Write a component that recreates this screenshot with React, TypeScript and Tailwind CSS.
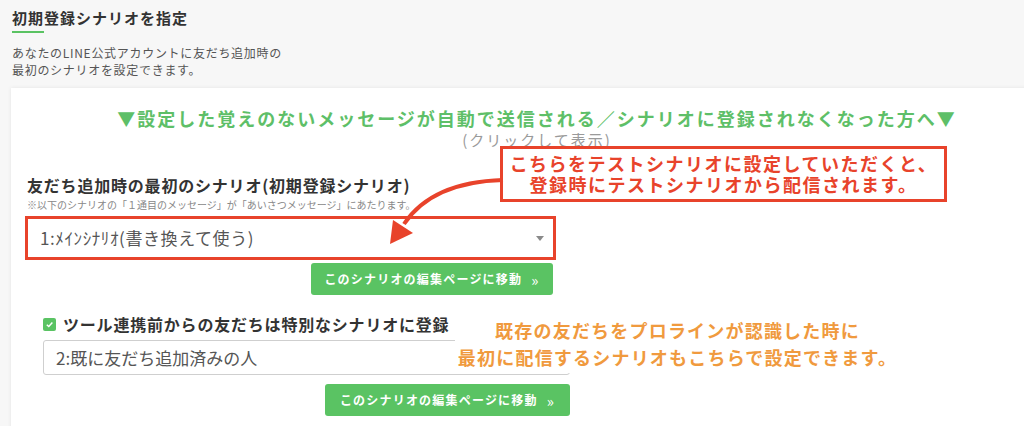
const jp = { fontFamily: '"Noto Sans CJK JP", "Noto Sans", sans-serif' };

function Caret() {
  return (
    <svg width="8" height="5" viewBox="0 0 8 5" className="shrink-0">
      <path d="M0 0 L8 0 L4 5 Z" fill="#8a8a8a" />
    </svg>
  );
}

function MoveButton({ width }: { width: string }) {
  return (
    <button
      className={`${width} h-[32px] rounded-[3px] bg-[#5ac363] text-white text-[12px] tracking-[1.2px] font-bold flex items-center justify-center gap-[9px]`}
    >
      <span>このシナリオの編集ページに移動</span>
      <span className="text-[15px] font-normal leading-none">»</span>
    </button>
  );
}

export default function App() {
  return (
    <div
      className="relative min-h-screen overflow-hidden bg-[#f7f7f7] px-[11px] text-[#333]"
      style={jp}
    >
      {/* header */}
      <div className="pt-[9px] pl-[1px]">
        <h1 className="text-[15px] leading-[17px] tracking-[1px] font-bold text-[#333]">
          初期登録シナリオを指定
        </h1>
        <div className="mt-[5px] h-[2px] w-[32px] bg-[#5ac363]" />
        <p className="mt-[11px] text-[12px] leading-[17px] tracking-[0.7px] text-[#555]">
          あなたのLINE公式アカウントに友だち追加時の
          <br />
          最初のシナリオを設定できます。
        </p>
      </div>

      {/* card */}
      <div className="mt-[10px] w-[1052px] h-[360px] bg-white shadow-[0_0_4px_rgba(0,0,0,0.08)] pt-[18px] px-[14px]">
        <p className="text-center text-[18px] leading-[24px] tracking-[2px] font-bold text-[#5ebf68]">
          ▼設定した覚えのないメッセージが自動で送信される／シナリオに登録されなくなった方へ▼
        </p>
        <p className="text-center text-[15px] leading-[20px] tracking-[2px] text-[#9a9a9a]">
          (クリックして表示)
        </p>

        <div className="mt-[26px] w-[531px]">
          <p className="pl-[2px] text-[16px] leading-[18px] tracking-[0.8px] font-bold text-[#333]">
            友だち追加時の最初のシナリオ(初期登録シナリオ)
          </p>
          <p className="mt-[5px] pl-[2px] text-[10px] leading-[12px] text-[#888]">
            ※以下のシナリオの「１通目のメッセージ」が「あいさつメッセージ」にあたります。
          </p>
          <div className="mt-[5px] h-[44px] border-[3px] border-[#e8432b] bg-white flex items-center justify-between pl-[12px] pr-[9px]">
            <span className="text-[17px] tracking-[0.6px] text-[#555]">1:ﾒｲﾝｼﾅﾘｵ(書き換えて使う)</span>
            <Caret />
          </div>
          <div className="mt-[3px] mr-[3px] flex justify-end">
            <MoveButton width="w-[242px]" />
          </div>
        </div>

        <div className="ml-[18px] mt-[21px] w-[527px]">
          <label className="flex items-center gap-[7px]">
            <span className="h-[13px] w-[13px] rounded-[2px] bg-[#5ac363] flex items-center justify-center">
              <svg width="9" height="9" viewBox="0 0 10 10">
                <path d="M2 5.2 L4.2 7.3 L8.2 2.8" fill="none" stroke="white" strokeWidth="1.6" />
              </svg>
            </span>
            <span className="text-[16px] leading-[16px] tracking-[0.8px] font-bold text-[#333]">
              ツール連携前からの友だちは特別なシナリオに登録
            </span>
          </label>
          <div className="mt-[8px] h-[35px] rounded-[3px] border border-[#cfcfcf] flex items-center pl-[12px]">
            <span className="text-[17px] text-[#555]">2:既に友だち追加済みの人</span>
          </div>
          <div className="mt-[9px] flex justify-end">
            <MoveButton width="w-[245px]" />
          </div>
        </div>
      </div>

      {/* annotation: red box */}
      <div className="absolute left-[500px] top-[146px] w-[447px] h-[56px] border-[3px] border-[#e8432b] bg-white flex flex-col items-center justify-center">
        <p className="text-center text-[18px] leading-[21px] tracking-[1.5px] font-bold text-[#e8432b]">
          こちらをテストシナリオに設定していただくと、
          <br />
          登録時にテストシナリオから配信されます。
        </p>
      </div>

      {/* annotation: arrow */}
      <svg className="absolute left-0 top-0 pointer-events-none" width="1024" height="426">
        <path d="M503 180 Q 432 182 404 224" fill="none" stroke="#e8432b" strokeWidth="4" />
        <path d="M390 244 L393 220 L413 233 Z" fill="#e8432b" />
      </svg>

      {/* annotation: orange text */}
      <div className="absolute left-[455px] top-[315px] w-[445px] h-[58px] bg-white pt-[2px]">
        <p className="text-center text-[18px] leading-[27px] tracking-[1.2px] font-bold text-[#f09a3e]">
          既存の友だちをプロラインが認識した時に
          <br />
          最初に配信するシナリオもこちらで設定できます。
        </p>
      </div>
    </div>
  );
}
